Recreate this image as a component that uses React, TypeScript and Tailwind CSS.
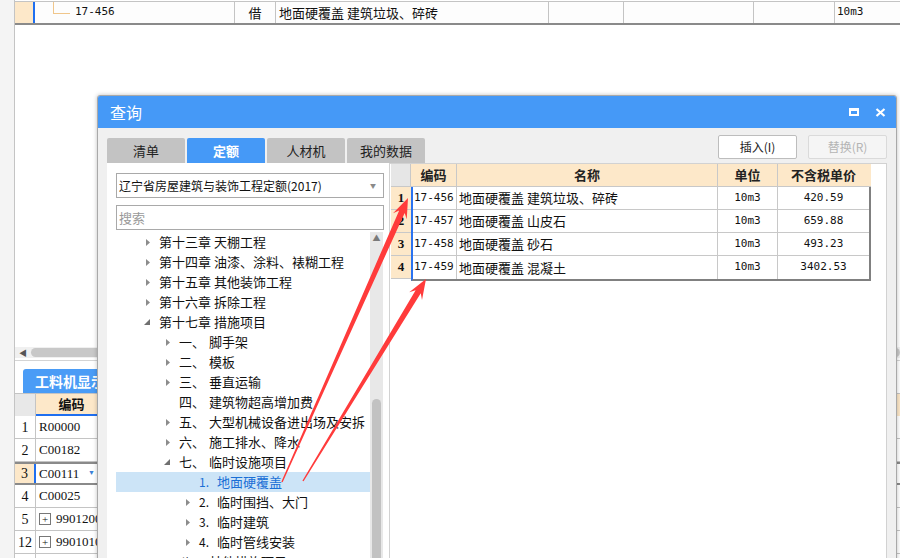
import React from "react";

type TreeRow = {
  level: 1 | 2 | 3;
  caret: "closed" | "open" | "none";
  num?: string;
  text: string;
  selected?: boolean;
};

const treeRows: TreeRow[] = [
  { level: 1, caret: "closed", text: "第十三章 天棚工程" },
  { level: 1, caret: "closed", text: "第十四章 油漆、涂料、裱糊工程" },
  { level: 1, caret: "closed", text: "第十五章 其他装饰工程" },
  { level: 1, caret: "closed", text: "第十六章 拆除工程" },
  { level: 1, caret: "open", text: "第十七章 措施项目" },
  { level: 2, caret: "closed", num: "一、", text: "脚手架" },
  { level: 2, caret: "closed", num: "二、", text: "模板" },
  { level: 2, caret: "closed", num: "三、", text: "垂直运输" },
  { level: 2, caret: "none", num: "四、", text: "建筑物超高增加费" },
  { level: 2, caret: "closed", num: "五、", text: "大型机械设备进出场及安拆" },
  { level: 2, caret: "closed", num: "六、", text: "施工排水、降水" },
  { level: 2, caret: "open", num: "七、", text: "临时设施项目" },
  { level: 3, caret: "none", num: "1.", text: "地面硬覆盖", selected: true },
  { level: 3, caret: "closed", num: "2.", text: "临时围挡、大门" },
  { level: 3, caret: "closed", num: "3.", text: "临时建筑" },
  { level: 3, caret: "closed", num: "4.", text: "临时管线安装" },
  { level: 2, caret: "closed", num: "八、", text: "其他措施项目" },
];

const quotaRows = [
  ["1", "17-456", "地面硬覆盖 建筑垃圾、碎砖", "10m3", "420.59"],
  ["2", "17-457", "地面硬覆盖 山皮石", "10m3", "659.88"],
  ["3", "17-458", "地面硬覆盖 砂石", "10m3", "493.23"],
  ["4", "17-459", "地面硬覆盖 混凝土", "10m3", "3402.53"],
];

const materialRows = [
  { n: "1", code: "R00000" },
  { n: "2", code: "C00182" },
  { n: "3", code: "C00111", selected: true },
  { n: "4", code: "C00025" },
  { n: "5", code: "990120001", plus: true },
  { n: "12", code: "990101001", plus: true },
  { n: "", code: "" },
];

function Caret({ open }: { open?: boolean }) {
  if (open) {
    return (
      <svg width="8" height="8" viewBox="0 0 8 8">
        <path d="M7 1 L7 7 L1 7 Z" fill="#707070" />
      </svg>
    );
  }
  return (
    <svg width="6" height="9" viewBox="0 0 6 9">
      <path d="M1 1 L5 4.5 L1 8 Z" fill="#8c8c8c" />
    </svg>
  );
}

function RedArrow({ tail, tip }: { tail: [number, number]; tip: [number, number] }) {
  const dx = tip[0] - tail[0];
  const dy = tip[1] - tail[1];
  const len = Math.hypot(dx, dy);
  const ux = dx / len;
  const uy = dy / len;
  const nx = -uy;
  const ny = ux;
  const head = 20;
  const neck = 15;
  const wing = 7.5;
  const shaft = 3;
  const p = (base: [number, number], along: number, side: number) =>
    `${base[0] + ux * along + nx * side},${base[1] + uy * along + ny * side}`;
  const pts = [
    p(tail, 0, 0.7),
    p(tip, -neck, shaft),
    p(tip, -head, wing),
    p(tip, 0, 0),
    p(tip, -head, -wing),
    p(tip, -neck, -shaft),
    p(tail, 0, -0.7),
  ].join(" ");
  return <polygon points={pts} fill="#ff3b3b" />;
}

export default function App() {
  return (
    <div className="relative w-[900px] h-[558px] overflow-hidden bg-white font-['Noto_Sans_CJK_SC','Noto_Sans',sans-serif] text-[12px] text-[#111]">
      {/* background window */}
      <div className="flex h-full">
        <div className="w-[15px] shrink-0 bg-[#f4f4f4] border-r border-[#c4c4c4]" />
        <div className="flex-1 flex flex-col overflow-hidden">
          {/* top table row */}
          <div className="h-[2px] shrink-0 border-b border-[#c4c4c4]" />
          <div className="flex h-[23px] shrink-0 bg-[#fdfdfd] border-b-2 border-[#8a8a8a]">
            <div className="w-[20px] bg-[#fde8c9] border-r-2 border-r-[#1f6ff0]" />
            <div className="relative w-[200px] flex items-center border-r border-[#c4c4c4]">
              <div className="absolute left-[18px] top-0 h-[12px] w-[17px] border-l border-b border-[#f0c68b]" />
              <span className="ml-[40px] font-['DejaVu_Sans_Mono',monospace] text-[11px]">17-456</span>
            </div>
            <div className="w-[41px] flex items-center justify-center border-r border-[#c4c4c4] text-[13px]">借</div>
            <div className="w-[273px] flex items-center pl-[3px] border-r border-[#c4c4c4] text-[13px]">地面硬覆盖 建筑垃圾、碎砖</div>
            <div className="w-[75px] border-r border-[#c4c4c4]" />
            <div className="w-[130px] border-r border-[#c4c4c4]" />
            <div className="w-[81px] border-r border-[#c4c4c4]" />
            <div className="flex-1 flex items-center pl-[2px] font-['DejaVu_Sans_Mono',monospace] text-[11px]">10m3</div>
          </div>

          <div className="h-[322px] shrink-0" />

          {/* bottom area */}
          <div className="flex items-center h-[11px] shrink-0 bg-[#f0f0f0]">
            <span className="ml-[4px] text-[#555] text-[8px] leading-none">◀</span>
            <div className="ml-[4px] flex-1 h-[9px] rounded-full bg-[#c8c8c8]" />
          </div>
          <div className="h-[9px] shrink-0 border-t border-[#d4d4d4] mt-[2px]" />
          <div className="flex h-[24px] shrink-0 pl-[8px]">
            <div className="w-[140px] rounded-t-[3px] bg-[#4a9cf6] text-white font-bold text-[14px] flex items-center pl-[12px]">工料机显示</div>
          </div>
          <div className="flex h-[23px] shrink-0 border-t border-[#c4c4c4]">
            <div className="w-[21px] bg-[#e8e8e8] border-r border-[#c4c4c4]" />
            <div className="w-[72px] bg-[#fde8c9] border-b-2 border-b-[#1f6ff0] border-r border-[#c4c4c4] flex items-center justify-center font-bold text-[13px]">编码</div>
            <div className="flex-1 bg-[#fde8c9]" />
          </div>
          {materialRows.map((r, i) => (
            <div
              key={i}
              className={
                r.selected
                  ? "flex h-[23px] shrink-0 border-y-2 border-[#8a8a8a]"
                  : "flex h-[23px] shrink-0 border-b border-[#c4c4c4]"
              }
            >
              <div
                className={
                  r.selected
                    ? "w-[21px] bg-[#fde8c9] border-r-2 border-r-[#1f6ff0] flex items-center justify-center font-['Liberation_Serif',serif] text-[14px]"
                    : "w-[21px] border-r border-[#c4c4c4] flex items-center justify-center font-['Liberation_Serif',serif] text-[14px]"
                }
              >
                {r.n}
              </div>
              <div className="w-[72px] flex items-center pl-[3px] border-r border-[#c4c4c4] overflow-hidden whitespace-nowrap font-['Liberation_Serif',serif] text-[13px]">
                {r.plus && (
                  <span className="mr-[5px] w-[12px] h-[12px] shrink-0 border border-[#777] flex items-center justify-center text-[11px] leading-none">+</span>
                )}
                {r.code}
                {r.selected && <span className="ml-auto mr-[12px] text-[#3b7fd6] text-[7px]">▼</span>}
              </div>
              <div className="w-[100px] border-r border-[#c4c4c4]" />
              <div className="flex-1" />
            </div>
          ))}
        </div>
      </div>

      {/* dialog */}
      <div className="absolute left-[97px] top-[95px] w-[800px] h-[480px] flex flex-col bg-[#f0f0f0] border border-[#a9a9a9] rounded-t-[3px] shadow-[0_0_4px_rgba(0,0,0,0.25)]">
        <div className="h-[32px] shrink-0 bg-[#4599f7] flex items-center pl-[12px] pr-[10px] text-white rounded-t-[2px]">
          <span className="text-[16px]">查询</span>
          <div className="ml-auto flex items-center gap-[16px]">
            <div className="w-[10px] h-[8px] border-2 border-t-[3px] border-white" />
            <svg width="11" height="9" viewBox="0 0 11 9">
              <path d="M1.5 1 L9.5 8 M9.5 1 L1.5 8" stroke="white" strokeWidth="2.2" />
            </svg>
          </div>
        </div>

        <div className="flex-1 flex flex-col px-[9px] pt-[7px]">
          <div className="flex h-[28px]">
            <div className="flex items-end gap-[2px]">
              <div className="w-[78px] h-[25px] rounded-t-[2px] bg-[#c3c3c3] flex items-center justify-center text-[13px] text-[#222]">清单</div>
              <div className="w-[78px] h-[25px] rounded-t-[2px] bg-[#4599f7] flex items-center justify-center text-[13px] font-bold text-white">定额</div>
              <div className="w-[78px] h-[25px] rounded-t-[2px] bg-[#c3c3c3] flex items-center justify-center text-[13px] text-[#222]">人材机</div>
              <div className="w-[78px] h-[25px] rounded-t-[2px] bg-[#c3c3c3] flex items-center justify-center text-[13px] text-[#222]">我的数据</div>
            </div>
            <div className="ml-auto flex items-start gap-[11px]">
              <div className="w-[79px] h-[24px] bg-white border border-[#bdbdbd] rounded-[2px] flex items-center justify-center text-[12px] text-[#222]">插入(I)</div>
              <div className="w-[79px] h-[24px] bg-[#f5f5f5] border border-[#dadada] rounded-[2px] flex items-center justify-center text-[12px] text-[#b4b4b4]">替换(R)</div>
            </div>
          </div>

          <div className="flex-1 flex">
            {/* left panel */}
            <div className="w-[282px] bg-white flex flex-col pl-[9px] pr-[5px]">
              <div className="mt-[10px] h-[25px] border border-[#a9a9a9] flex items-center pl-[2px] pr-[7px] text-[12px]">
                <span>辽宁省房屋建筑与装饰工程定额(2017)</span>
                <span className="ml-auto text-[#8a8a8a] text-[6px]">▼</span>
              </div>
              <div className="mt-[7px] h-[25px] border border-[#a9a9a9] flex items-center pl-[2px] text-[13px] text-[#9a9a9a]">搜索</div>
              <div className="mt-[2px] flex-1 flex">
                <div className="w-[254px] flex flex-col">
                  {treeRows.map((r, i) => (
                    <div
                      key={i}
                      className={
                        r.selected
                          ? "h-[20px] shrink-0 flex items-center bg-[#cce4f7] text-[#1a6fd6] whitespace-nowrap"
                          : "h-[20px] shrink-0 flex items-center whitespace-nowrap"
                      }
                    >
                      <div
                        className={
                          r.level === 1
                            ? "w-[43px] shrink-0 flex justify-end pr-[8px]"
                            : r.level === 2
                            ? "w-[63px] shrink-0 flex justify-end pr-[8px]"
                            : "w-[83px] shrink-0 flex justify-end pr-[8px]"
                        }
                      >
                        {r.caret !== "none" && <Caret open={r.caret === "open"} />}
                      </div>
                      {r.num && (
                        <span className={r.level === 2 ? "w-[30px] text-[13px]" : "w-[18px] text-[12px]"}>{r.num}</span>
                      )}
                      <span className="text-[13px]">{r.text}</span>
                    </div>
                  ))}
                </div>
                <div className="w-[13px] bg-[#e8e8e8] flex flex-col items-center">
                  <span className="mt-[2px] text-[#7a7a7a] text-[8px] leading-none">▲</span>
                  <div className="mt-[157px] w-[9px] flex-1 rounded-full bg-[#c2c2c2]" />
                </div>
              </div>
            </div>

            {/* right panel */}
            <div className="flex-1 bg-white border border-[#d2d2d2] pl-[1px]">
              <div className="flex">
                <div className="w-[20px] flex flex-col">
                  <div className="h-[23px] bg-[#e6e6e6] border-r border-b border-[#c8c8c8]" />
                  {quotaRows.map((r) => (
                    <div
                      key={r[0]}
                      className="h-[23px] bg-[#fde8c9] border-b border-[#c8c8c8] flex items-center justify-center font-['Liberation_Serif',serif] font-bold text-[13px]"
                    >
                      {r[0]}
                    </div>
                  ))}
                </div>
                <div className="flex flex-col">
                  <div className="flex h-[23px] bg-[#fde8c9] font-bold text-[13px] text-[#222] border-b border-[#c8c8c8]">
                    <div className="w-[46px] border-r border-[#c8c8c8] flex items-center justify-center">编码</div>
                    <div className="w-[261px] border-r border-[#c8c8c8] flex items-center justify-center">名称</div>
                    <div className="w-[60px] border-r border-[#c8c8c8] flex items-center justify-center">单位</div>
                    <div className="w-[91px] flex items-center justify-center">不含税单价</div>
                  </div>
                  <div className="border-l-2 border-l-[#2a73f0] border-r-2 border-r-[#808080] border-b-2 border-b-[#808080]">
                    {quotaRows.map((r) => (
                      <div key={r[0]} className="flex h-[23px] border-b border-[#c8c8c8] last:border-b-0">
                        <div className="w-[44px] border-r border-[#c8c8c8] flex items-center pl-[1px] font-['DejaVu_Sans_Mono',monospace] text-[11px]">{r[1]}</div>
                        <div className="w-[261px] border-r border-[#c8c8c8] flex items-center pl-[2px] text-[13px]">{r[2]}</div>
                        <div className="w-[60px] border-r border-[#c8c8c8] flex items-center justify-center font-['DejaVu_Sans_Mono',monospace] text-[11px]">{r[3]}</div>
                        <div className="w-[91px] flex items-center justify-center font-['DejaVu_Sans_Mono',monospace] text-[11px]">{r[4]}</div>
                      </div>
                    ))}
                  </div>
                </div>
              </div>
            </div>
          </div>
        </div>
      </div>

      {/* annotation arrows */}
      <svg className="absolute inset-0 pointer-events-none" width="900" height="558">
        <RedArrow tail={[282, 482]} tip={[408, 198]} />
        <RedArrow tail={[303, 481]} tip={[426, 279]} />
      </svg>
    </div>
  );
}
